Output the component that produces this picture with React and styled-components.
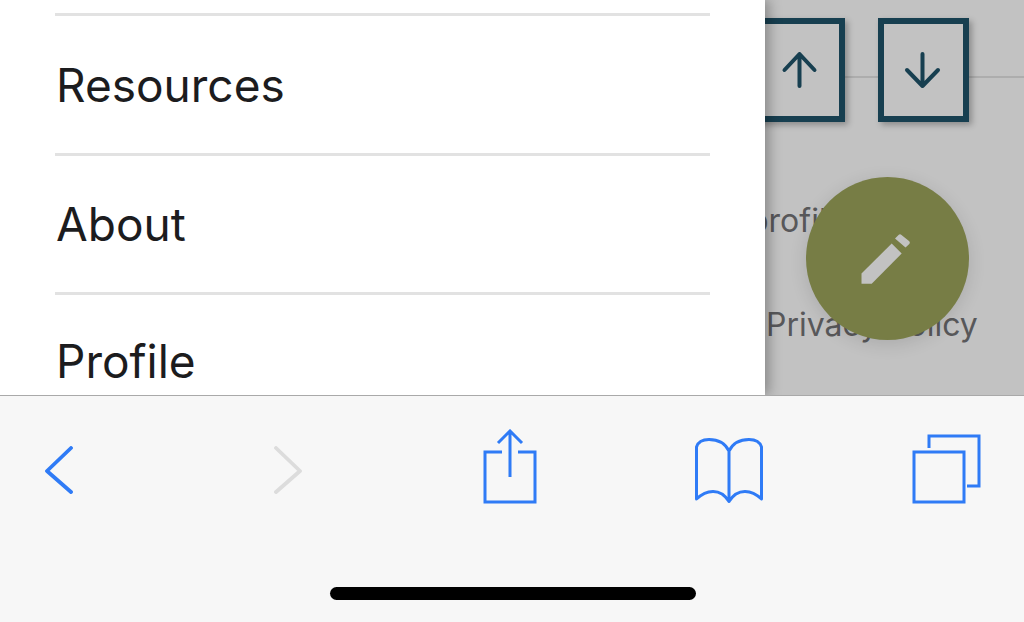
import styled, { createGlobalStyle } from "styled-components";

const GlobalStyle = createGlobalStyle`
  html, body {
    margin: 0;
    padding: 0;
    height: 100%;
    overflow: hidden;
    font-family: Inter, "Liberation Sans", sans-serif;
  }
`;

const Screen = styled.div`
  display: flex;
  flex-direction: column;
  width: 1024px;
  height: 622px;
  overflow: hidden;
`;

const Viewport = styled.main`
  position: relative;
  flex: none;
  height: 395px;
  overflow: hidden;
  background: #c2c2c2;
`;

const PageContent = styled.div`
  display: flex;
  flex-direction: column;
  align-items: flex-end;
  padding: 18px 55px 0 0;
`;

const ButtonRow = styled.div`
  position: relative;
  display: flex;
  gap: 33px;

  &::before {
    content: "";
    position: absolute;
    top: 58px;
    left: 0;
    right: -55px;
    height: 2px;
    background: #adadad;
  }
`;

const ArrowButton = styled.button`
  position: relative;
  display: flex;
  align-items: center;
  justify-content: center;
  width: 91px;
  height: 104px;
  padding: 0;
  border: 6px solid #173f50;
  background: #c2c2c2;
  box-shadow: 3px 3px 6px rgba(0, 0, 0, 0.28);
`;

const FooterLinks = styled.nav`
  align-self: flex-start;
  display: flex;
  flex-direction: column;
  align-items: flex-start;
  gap: 60px;
  margin: 77px 0 0 749px;
`;

const FooterLink = styled.span`
  font-size: 32px;
  line-height: 44px;
  color: #58585a;
  white-space: nowrap;
  margin-left: ${(props) => props.$indent || 0}px;
`;

const Fab = styled.button`
  position: absolute;
  top: 177px;
  left: 806px;
  display: flex;
  align-items: center;
  justify-content: center;
  width: 163px;
  height: 163px;
  padding: 0 4px 0 0;
  border: 0;
  border-radius: 50%;
  background: #777d45;
  box-shadow: 0 4px 18px rgba(0, 0, 0, 0.12);
`;

const Drawer = styled.aside`
  position: absolute;
  top: 0;
  left: 0;
  bottom: 0;
  width: 765px;
  padding: 13px 55px 0;
  box-sizing: border-box;
  background: #fff;
  box-shadow: 4px 0 12px rgba(0, 0, 0, 0.3);
`;

const MenuItem = styled.a`
  display: flex;
  align-items: center;
  box-sizing: border-box;
  height: 139.5px;
  border-top: 3px solid #e2e2e2;
  padding: ${(props) => props.$pushDown || 0}px 0 ${(props) => props.$pushUp || 0}px 1px;
  font-size: 46px;
  color: #1c1c1e;
`;

const Toolbar = styled.footer`
  flex: 1;
  display: flex;
  flex-direction: column;
  box-sizing: border-box;
  border-top: 1px solid #a9a9a9;
  background: #f7f7f7;
`;

const ToolRow = styled.div`
  display: flex;
  align-items: flex-start;
  height: 191px;
`;

const ToolIcon = styled.svg`
  flex: none;
  margin-left: ${(props) => props.$left}px;
  margin-top: ${(props) => props.$top}px;
  fill: none;
  stroke: ${(props) => (props.$disabled ? "#dcdcdc" : "#2f7bf6")};
  stroke-width: ${(props) => props.$weight || 3}px;
`;

const HomeIndicator = styled.div`
  align-self: center;
  width: 366px;
  height: 13px;
  margin-left: 1px;
  border-radius: 7px;
  background: #000;
`;

export default function App() {
  return (
    <Screen>
      <GlobalStyle />
      <Viewport>
        <PageContent>
          <ButtonRow>
            <ArrowButton aria-label="Up">
              <svg width="40" height="40" viewBox="0 0 40 40" fill="none" stroke="#173f50" strokeWidth="4" strokeLinecap="round" strokeLinejoin="round">
                <path d="M19.500 36V4M4.500 20L19.500 4L34.500 20" />
              </svg>
            </ArrowButton>
            <ArrowButton aria-label="Down">
              <svg width="40" height="40" viewBox="0 0 40 40" fill="none" stroke="#173f50" strokeWidth="4" strokeLinecap="round" strokeLinejoin="round">
                <path d="M18.500 4V36M3 20L18.500 36L34 20" />
              </svg>
            </ArrowButton>
          </ButtonRow>
          <FooterLinks>
            <FooterLink>profile</FooterLink>
            <FooterLink $indent={17}>Privacy Policy</FooterLink>
          </FooterLinks>
        </PageContent>
        <Fab aria-label="Edit">
          <svg width="52" height="52" viewBox="0 0 52 52" fill="#c2c2c2">
            <path d="M1.500 40.500L31.700 10.500L41.700 20.500L11.700 50.800H1.500Z" />
            <path d="M35 5.500L38.500 2Q40 0.600 41.500 2L49.300 8.300Q50.500 9.700 49.300 11L45.500 14.500Z" />
          </svg>
        </Fab>
        <Drawer>
          <MenuItem $pushDown={2}>Resources</MenuItem>
          <MenuItem>About</MenuItem>
          <MenuItem $pushUp={4}>Profile</MenuItem>
        </Drawer>
      </Viewport>
      <Toolbar>
        <ToolRow>
          <ToolIcon $left={45} $top={50} $weight={3.8} width="28" height="48" viewBox="0 0 28 48" strokeLinecap="round" strokeLinejoin="round">
            <path d="M26 2L2 25L26 46" />
          </ToolIcon>
          <ToolIcon $left={201} $top={50} $weight={3.8} $disabled width="28" height="48" viewBox="0 0 28 48" strokeLinecap="round" strokeLinejoin="round">
            <path d="M2 2L26 25L2 46" />
          </ToolIcon>
          <ToolIcon $left={181} $top={33} width="54" height="75" viewBox="0 0 54 75">
            <path d="M19 23H2V73H52V23H35" />
            <path d="M27 48V2M15 14L27 2L39 14" />
          </ToolIcon>
          <ToolIcon $left={157} $top={41} width="70" height="67" viewBox="0 0 70 67" strokeLinecap="round" strokeLinejoin="round">
            <path d="M35 64.500V14C31 6 24 2.500 15 2.500C9 2.500 4 5 2.500 10V62C12 53 26 50 35 64.500C44 50 58 53 67.500 62V10C66 5 61 2.500 55 2.500C46 2.500 39 6 35 14" />
          </ToolIcon>
          <ToolIcon $left={148} $top={38} width="70" height="70" viewBox="0 0 70 70">
            <path d="M17 14V2H67V52H55" />
            <rect x="2" y="18" width="50" height="50" />
          </ToolIcon>
        </ToolRow>
        <HomeIndicator />
      </Toolbar>
    </Screen>
  );
}
